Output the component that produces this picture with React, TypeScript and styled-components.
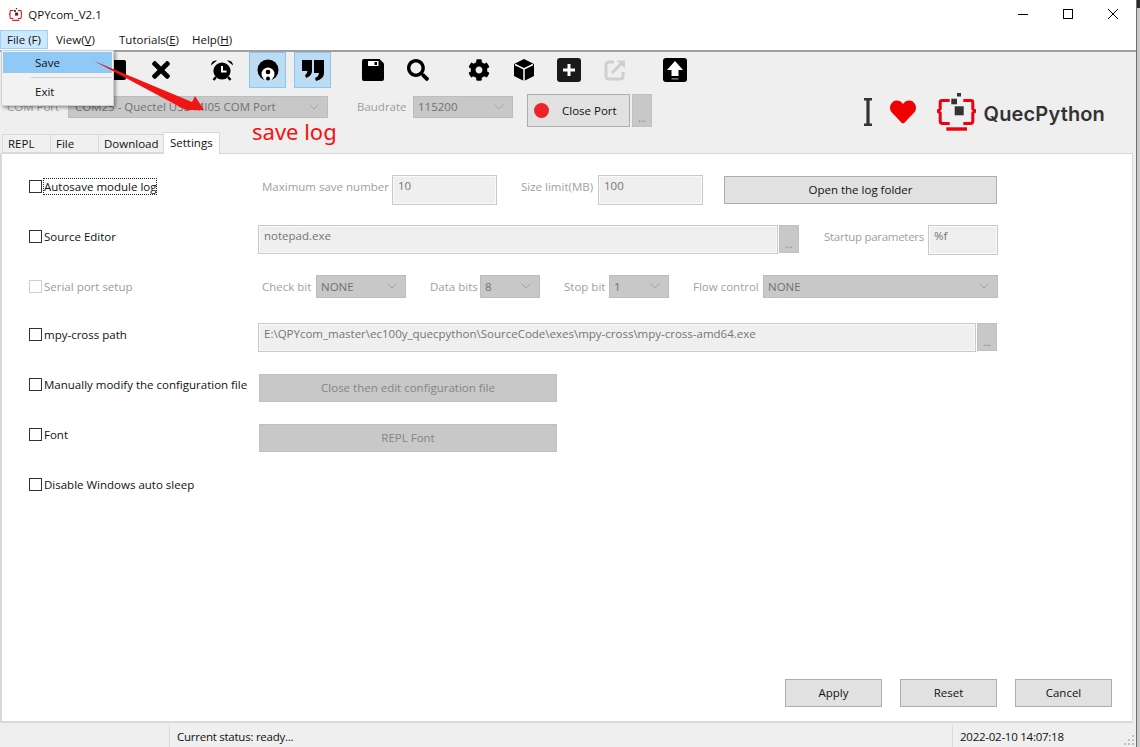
import React from "react";
import styled, { createGlobalStyle } from "styled-components";
import { FaTimes, FaSearch, FaCog, FaHeart } from "react-icons/fa";

const Global = createGlobalStyle`
  html, body { margin: 0; padding: 0; overflow: hidden; background: #c9c9c9; }
  * { box-sizing: border-box; }
  #root { width: 1140px; height: 747px; }
`;

const Screen = styled.div`
  width: 1140px; height: 747px; display: flex; position: relative; overflow: hidden;
  font-family: "Open Sans", "Noto Sans", sans-serif; font-size: 11.5px; color: #111;
`;
const Win = styled.div`
  width: 1136px; height: 747px; display: flex; flex-direction: column; background: #fff;
`;
const Edge = styled.div`
  flex: 1; border-left: 1px solid #6e6e6e; background: linear-gradient(#2a2a2a 0 8px, #c9c9c9 8px);
`;
const TitleBar = styled.div`
  height: 30px; display: flex; align-items: center; padding: 0 1px 2px 9px; background: #fff;
`;
const TitleText = styled.span`
  margin-left: 6px; flex: 1;
`;
const WinBtn = styled.div`
  width: 45px; height: 28px; display: flex; align-items: center; justify-content: center;
`;
const MenuBar = styled.div`
  height: 22px; display: flex; padding-bottom: 1px; border-bottom: 2px solid #a0a0a0; background: #fff;
`;
const MenuItem = styled.div<{ $w: number; $open?: boolean }>`
  width: ${(p) => p.$w}px; height: 19px; display: flex; align-items: center; padding-left: ${(p) => (p.$open ? 6 : 7)}px;
  background: ${(p) => (p.$open ? "#cce8ff" : "transparent")};
  border: 1px solid ${(p) => (p.$open ? "#99d1ff" : "transparent")};
  white-space: nowrap; u { text-underline-offset: 1px; }
`;
const Toolbar = styled.div`
  height: 80px; flex: none; display: flex; background: #efefef; justify-content: space-between;
`;
const ToolLeft = styled.div`
  display: flex; flex-direction: column;
`;
const IconRow = styled.div`
  display: flex; height: 36px; padding-left: 100px;
`;
const ToolBtn = styled.div<{ $ml?: number; $active?: boolean }>`
  width: ${(p) => (p.$active ? 37 : 36)}px; height: 36px; margin-left: ${(p) => p.$ml ?? 0}px; display: flex; align-items: center; justify-content: center;
  color: #000;
  background: ${(p) => (p.$active ? "#bcdcf4" : "transparent")};
  border: 1px solid ${(p) => (p.$active ? "#8cc6ee" : "transparent")};
`;
const PortRow = styled.div`
  display: flex; margin-top: 6px; align-items: flex-start; padding-left: 7px;
`;
const PortLabel = styled.div<{ $w: number; $ml?: number }>`
  width: ${(p) => p.$w}px; margin-left: ${(p) => p.$ml ?? 0}px; height: 24px; flex: none; display: flex; align-items: center; color: #9c9c9c; white-space: nowrap;
`;
const ComboBox = styled.div<{ $w: number; $h?: number; $mt?: number; $pl?: number }>`
  width: ${(p) => p.$w}px; height: ${(p) => p.$h ?? 23}px; margin-top: ${(p) => p.$mt ?? 0}px; flex: none;
  display: flex; align-items: center; justify-content: space-between; padding: 0 8px 1px ${(p) => p.$pl ?? 4}px;
  background: #c8c8c8; border: 1px solid #bdbdbd; color: #717171; white-space: nowrap; overflow: hidden;
`;
const CloseBtn = styled.div`
  width: 103px; height: 33px; margin-left: 14px; display: flex; align-items: center; padding-left: 6px; gap: 13px;
  background: #e1e1e1; border: 1px solid #adadad;
`;
const RedDot = styled.span`
  width: 15px; height: 15px; border-radius: 50%; background: #ee2327;
`;
const Dots = styled.div<{ $h: number; $ml: number }>`
  width: 20px; height: ${(p) => p.$h}px; margin-left: ${(p) => p.$ml}px; flex: none; background: #c8c8c8; border: 1px solid #c0c0c0;
  display: flex; align-items: flex-end; justify-content: center; color: #8a7f8c; line-height: 13px; padding-bottom: 1px; font-size: 10px;
`;
const Brand = styled.div`
  display: flex; align-items: center; margin: 40px 31px 0 0; height: 40px; color: #333;
`;
const BrandName = styled.span`
  font-family: Inter, "Noto Sans", sans-serif; font-weight: 600; font-size: 20px; letter-spacing: 0.15px; margin: 3px 0 0 8px; color: #333;
`;
const HeartWrap = styled.div`
  margin: 0 21px 0 18px; color: #f00000; display: flex;
`;
const Tabs = styled.div`
  height: 21px; flex: none; display: flex; align-items: flex-end; background: #efefef; padding-left: 2px; position: relative; z-index: 1;
`;
const Tab = styled.div<{ $w: number; $sel?: boolean }>`
  width: ${(p) => p.$w}px; height: ${(p) => (p.$sel ? 22 : 19)}px; margin-bottom: ${(p) => (p.$sel ? -1 : 0)}px;
  padding-left: ${(p) => (p.$sel ? 6 : 5)}px; padding-bottom: ${(p) => (p.$sel ? 2 : 0)}px; display: flex; align-items: center;
  background: ${(p) => (p.$sel ? "#fff" : "#f0f0f0")};
  border: 1px solid #d9d9d9; border-bottom: ${(p) => (p.$sel ? "none" : "1px solid #d9d9d9")};
  border-right: ${(p) => (p.$sel ? "1px solid #d9d9d9" : "none")};
`;
const PanelWrap = styled.div`
  flex: 1; display: flex; background: #efefef; padding-right: 3px; min-height: 0;
`;
const Panel = styled.div`
  flex: 1; display: flex; flex-direction: column; background: #fff; border: 1px solid #d9d9d9; border-left-width: 2px; border-bottom-width: 2px; padding: 8px 0 14px 27px;
`;
const Row = styled.div<{ $h?: number }>`
  height: ${(p) => p.$h ?? 50}px; padding-top: 13px; display: flex; align-items: flex-start; flex: none;
`;
const CheckCol = styled.div`
  width: 229px; height: 22px; flex: none; display: flex; align-items: center; gap: 2px; white-space: nowrap;
`;
const Box = styled.span<{ $off?: boolean }>`
  width: 13px; height: 13px; flex: none; background: #fff; border: 1px solid ${(p) => (p.$off ? "#cfcfcf" : "#333")};
`;
const CheckText = styled.span<{ $off?: boolean; $focus?: boolean }>`
  color: ${(p) => (p.$off ? "#9c9c9c" : "#111")};
  outline: ${(p) => (p.$focus ? "1px dotted #222" : "none")};
`;
const FieldLabel = styled.div<{ $w: number; $ml?: number; $tight?: boolean }>`
  width: ${(p) => p.$w}px; margin-left: ${(p) => p.$ml ?? 0}px; height: 22px; flex: none; display: flex; align-items: center; color: #a0a0a0; white-space: nowrap;
  letter-spacing: ${(p) => (p.$tight ? "-0.28px" : "0")};
`;
const Field = styled.div<{ $w: number; $h: number }>`
  width: ${(p) => p.$w}px; height: ${(p) => p.$h}px; flex: none; padding: 2px 5px; line-height: 16px; color: #757575; white-space: nowrap; overflow: hidden;
  background: #efefef; border: 1px solid #c9c9c9; box-shadow: inset 0 0 0 1px #f9f9f9;
`;
const Btn = styled.div<{ $w: number; $ml?: number; $mt?: number; $off?: boolean; $h?: number }>`
  width: ${(p) => p.$w}px; height: ${(p) => p.$h ?? 28}px; margin-left: ${(p) => p.$ml ?? 0}px; margin-top: ${(p) => p.$mt ?? 0}px; flex: none;
  display: flex; align-items: center; justify-content: center; padding-bottom: 2px;
  background: ${(p) => (p.$off ? "#c8c8c8" : "#e1e1e1")};
  border: 1px solid ${(p) => (p.$off ? "#bfbfbf" : "#adadad")};
  color: ${(p) => (p.$off ? "#858585" : "#111")};
`;
const Footer = styled.div`
  margin-top: auto; display: flex; padding-left: 756px; gap: 18px;
`;
const StatusBar = styled.div`
  height: 24px; flex: none; display: flex; background: #efefef; padding-top: 2px; position: relative; letter-spacing: -0.25px;
`;
const StatusCell = styled.div<{ $w: number; $div?: boolean }>`
  width: ${(p) => p.$w}px; flex: none; display: flex; align-items: center; padding-left: ${(p) => (p.$div ? 7 : 0)}px;
  border-left: ${(p) => (p.$div ? "1px solid #d9d9d9" : "none")};
`;
const Grip = styled.svg`
  position: absolute; right: 1px; bottom: 1px;
`;
const Menu = styled.div`
  position: absolute; left: 1px; top: 50px; width: 113px; height: 56px; background: #f2f2f2; border: 1px solid #cfcfcf;
  box-shadow: 2px 2px 3px rgba(0,0,0,.35); padding: 1px 1px; z-index: 5;
`;
const MenuRow = styled.div<{ $hl?: boolean }>`
  height: 21px; display: flex; align-items: center; padding-left: 32px;
  background: ${(p) => (p.$hl ? "#90c8f6" : "transparent")};
`;
const MenuSep = styled.div`
  height: 1px; background: #d0d0d0; margin: 4px 0 3px 28px;
`;
const Arrow = styled.svg`
  position: absolute; left: 90px; top: 56px; z-index: 6;
`;
const SaveLog = styled.div`
  position: absolute; left: 252px; top: 116px; color: #fa0f0f; font-size: 22px; line-height: 30px; z-index: 6; font-family: "Noto Sans", sans-serif;
`;

const Logo = ({ s }: { s: number }) => (
  <svg width={(s * 39) / 38} height={s} viewBox="0 0 39 38" fill="none">
    <path
      d="M12.7 7.5H5Q3.2 7.5 3.2 9.3V16L.6 18L3.2 20V28Q3.2 30.5 5.5 30.5H12.7M26.3 7.5H34Q35.8 7.5 35.8 9.3V16L38.4 18L35.8 20V28Q35.8 30.5 33.5 30.5H26.3"
      stroke="#f0000f"
      strokeWidth="3"
      strokeLinejoin="round"
    />
    <rect x="9.3" y="34.3" width="20.7" height="3.4" fill="#f0000f" />
    <rect x="20" y="0" width="4" height="3.5" fill="#333" />
    <rect x="14.3" y="5.7" width="5.7" height="5.6" fill="#333" />
    <rect x="17.7" y="13.3" width="9" height="9" fill="#333" />
  </svg>
);

const StopIcon = () => (
  <svg width="20" height="20"><rect width="18" height="20" rx="2" /></svg>
);
const AlarmIcon = () => (
  <svg width="24" height="24" viewBox="0 0 24 24">
    <circle cx="12" cy="13" r="8.6" fill="#000" />
    <path d="M12 8v5.5h4.5" stroke="#fff" strokeWidth="2" fill="none" />
    <path d="M1 7.5A5 5 0 0 1 7 2.5ZM23 7.5A5 5 0 0 0 17 2.5Z" fill="#000" />
    <path d="M6 19l-2.5 3M18 19l2.5 3" stroke="#000" strokeWidth="2.4" />
  </svg>
);
const ReplIcon = () => (
  <svg width="24" height="24" viewBox="0 0 24 24">
    <circle cx="12" cy="12" r="10.5" fill="#000" />
    <circle cx="12" cy="16" r="6.5" fill="#fff" />
    <rect x="8" y="21" width="8" height="3" fill="#bcdcf4" />
    <circle cx="12" cy="14" r="2.3" fill="#000" />
    <circle cx="12" cy="20.4" r="2" fill="#000" />
  </svg>
);
const QuoteIcon = () => (
  <svg width="24" height="24" viewBox="0 0 24 24" fill="#000">
    <path d="M1 2H11V13Q11 18 5 20L4 17Q6 16 6.5 13H1Z" />
    <path d="M13 2H23V15Q23 21 15 23L14 20Q17.5 19 18 15H13Z" />
  </svg>
);
const SaveIcon = () => (
  <svg width="24" height="24" viewBox="0 0 24 24">
    <path d="M3 1H18.5L23 5.5V21Q23 23 21 23H3Q1 23 1 21V3Q1 1 3 1Z" fill="#000" />
    <rect x="7" y="3" width="10.5" height="5" fill="#fff" />
    <rect x="13.5" y="4" width="2.5" height="3" fill="#000" />
  </svg>
);
const CubeIcon = () => (
  <svg width="24" height="24" viewBox="0 0 24 24">
    <path d="M12 1L22 6V18L12 23L2 18V6Z" fill="#000" />
    <path d="M3 6.5L12 11L21 6.5M12 11V23" stroke="#fff" strokeWidth="1.5" fill="none" />
  </svg>
);
const PlusIcon = () => (
  <svg width="24" height="24" viewBox="0 0 24 24">
    <rect width="24" height="24" rx="3" fill="#1a1a1a" />
    <path d="M12 6V18M6 12H18" stroke="#fff" strokeWidth="3" />
  </svg>
);
const LinkIcon = () => (
  <svg width="24" height="24" viewBox="0 0 24 24" fill="none" stroke="#cfcfcf" strokeWidth="3">
    <path d="M11 4H6Q3 4 3 7V18Q3 21 6 21H17Q20 21 20 18V14" />
    <path d="M9 15L20 4" />
    <path d="M14 2.5H22V10.5Z" fill="#cfcfcf" stroke="none" />
  </svg>
);
const UploadIcon = () => (
  <svg width="24" height="24" viewBox="0 0 24 24">
    <rect width="24" height="24" rx="3" fill="#000" />
    <path d="M12 3L20 12H15.5V18H8.5V12H4Z" fill="#fff" />
    <rect x="8.5" y="20" width="7" height="1.6" fill="#777" />
  </svg>
);
const Cursor = () => (
  <svg width="8" height="28" viewBox="0 0 8 28" fill="#333">
    <rect width="8" height="2.5" />
    <rect y="25.5" width="8" height="2.5" />
    <rect x="2.4" width="3.2" height="28" />
  </svg>
);
const Chevron = () => (
  <svg width="10" height="6" viewBox="0 0 10 6" fill="none" stroke="#a5a5a5">
    <path d="M.5.5L5 5L9.5.5" />
  </svg>
);

const Combo = ({ w, h, mt, pl, text }: { w: number; h?: number; mt?: number; pl?: number; text: string }) => (
  <ComboBox $w={w} $h={h} $mt={mt} $pl={pl}>
    <span>{text}</span>
    <Chevron />
  </ComboBox>
);

const Check = ({ text, off, focus }: { text: string; off?: boolean; focus?: boolean }) => (
  <CheckCol>
    <Box $off={off} />
    <CheckText $off={off} $focus={focus}>{text}</CheckText>
  </CheckCol>
);

export default function App() {
  return (
    <Screen>
      <Global />
      <Win>
        <TitleBar>
          <Logo s={13} />
          <TitleText>QPYcom_V2.1</TitleText>
          <WinBtn>
            <svg width="10" height="10"><path d="M0 5.5H10" stroke="#000" /></svg>
          </WinBtn>
          <WinBtn>
            <svg width="10" height="10"><rect x=".5" y=".5" width="9" height="9" fill="none" stroke="#000" /></svg>
          </WinBtn>
          <WinBtn>
            <svg width="10" height="10"><path d="M0 0L10 10M10 0L0 10" stroke="#000" /></svg>
          </WinBtn>
        </TitleBar>
        <MenuBar>
          <MenuItem $w={48} $open>File (F)</MenuItem>
          <MenuItem $w={63}>View(<u>V</u>)</MenuItem>
          <MenuItem $w={73}>Tutorials(<u>E</u>)</MenuItem>
          <MenuItem $w={60}>Help(<u>H</u>)</MenuItem>
        </MenuBar>
        <Toolbar>
          <ToolLeft>
            <IconRow>
              <ToolBtn><StopIcon /></ToolBtn>
              <ToolBtn $ml={7}><FaTimes size={26} /></ToolBtn>
              <ToolBtn $ml={25}><AlarmIcon /></ToolBtn>
              <ToolBtn $ml={9} $active><ReplIcon /></ToolBtn>
              <ToolBtn $ml={8} $active><QuoteIcon /></ToolBtn>
              <ToolBtn $ml={24}><SaveIcon /></ToolBtn>
              <ToolBtn $ml={9}><FaSearch size={22} /></ToolBtn>
              <ToolBtn $ml={25}><FaCog size={22} /></ToolBtn>
              <ToolBtn $ml={9}><CubeIcon /></ToolBtn>
              <ToolBtn $ml={9}><PlusIcon /></ToolBtn>
              <ToolBtn $ml={10}><LinkIcon /></ToolBtn>
              <ToolBtn $ml={24}><UploadIcon /></ToolBtn>
            </IconRow>
            <PortRow>
              <PortLabel $w={61}>COM Port</PortLabel>
              <Combo w={260} mt={2} h={22} pl={6} text="COM25 - Quectel USB MI05 COM Port" />
              <PortLabel $w={56} $ml={29}>Baudrate</PortLabel>
              <Combo w={100} mt={2} h={22} text="115200" />
              <CloseBtn><RedDot />Close Port</CloseBtn>
              <Dots $h={33} $ml={2}>...</Dots>
            </PortRow>
          </ToolLeft>
          <Brand>
            <Cursor />
            <HeartWrap><FaHeart size={26} /></HeartWrap>
            <Logo s={38} />
            <BrandName>QuecPython</BrandName>
          </Brand>
        </Toolbar>
        <Tabs>
          <Tab $w={48}>REPL</Tab>
          <Tab $w={48}>File</Tab>
          <Tab $w={65}>Download</Tab>
          <Tab $w={57} $sel>Settings</Tab>
        </Tabs>
        <PanelWrap>
          <Panel>
            <Row>
              <Check text="Autosave module log" focus />
              <FieldLabel $w={130} $ml={4}>Maximum save number</FieldLabel>
              <Field $w={105} $h={30}>10</Field>
              <FieldLabel $w={77} $ml={24}>Size limit(MB)</FieldLabel>
              <Field $w={105} $h={30}>100</Field>
              <Btn $w={273} $ml={21} $mt={1}>Open the log folder</Btn>
            </Row>
            <Row>
              <Check text="Source Editor" />
              <Field $w={520} $h={29}>notepad.exe</Field>
              <Dots $h={28} $ml={1}>...</Dots>
              <FieldLabel $w={104} $ml={25} $tight>Startup parameters</FieldLabel>
              <Field $w={70} $h={30}>%f</Field>
            </Row>
            <Row $h={48}>
              <Check text="Serial port setup" off />
              <FieldLabel $w={54} $ml={4}>Check bit</FieldLabel>
              <Combo w={90} text="NONE" />
              <FieldLabel $w={50} $ml={24}>Data bits</FieldLabel>
              <Combo w={60} text="8" />
              <FieldLabel $w={45} $ml={24}>Stop bit</FieldLabel>
              <Combo w={60} text="1" />
              <FieldLabel $w={70} $ml={24}>Flow control</FieldLabel>
              <Combo w={235} text="NONE" />
            </Row>
            <Row>
              <Check text="mpy-cross path" />
              <Field $w={718} $h={29}>E:\QPYcom_master\ec100y_quecpython\SourceCode\exes\mpy-cross\mpy-cross-amd64.exe</Field>
              <Dots $h={28} $ml={1}>...</Dots>
            </Row>
            <Row>
              <Check text="Manually modify the configuration file" />
              <Btn $w={298} $ml={1} $mt={1} $off>Close then edit configuration file</Btn>
            </Row>
            <Row>
              <Check text="Font" />
              <Btn $w={298} $ml={1} $mt={1} $off>REPL Font</Btn>
            </Row>
            <Row>
              <Check text="Disable Windows auto sleep" />
            </Row>
            <Footer>
              <Btn $w={97}>Apply</Btn>
              <Btn $w={97}>Reset</Btn>
              <Btn $w={97}>Cancel</Btn>
            </Footer>
          </Panel>
        </PanelWrap>
        <StatusBar>
          <StatusCell $w={169} />
          <StatusCell $w={783} $div>Current status: ready...</StatusCell>
          <StatusCell $w={180} $div>2022-02-10 14:07:18</StatusCell>
          <Grip width="11" height="11" viewBox="0 0 11 11" fill="#bdbdbd">
            <rect x="8" y="0" width="2" height="2" />
            <rect x="4" y="4" width="2" height="2" />
            <rect x="8" y="4" width="2" height="2" />
            <rect x="0" y="8" width="2" height="2" />
            <rect x="4" y="8" width="2" height="2" />
            <rect x="8" y="8" width="2" height="2" />
          </Grip>
        </StatusBar>
      </Win>
      <Edge />
      <Menu>
        <MenuRow $hl>Save</MenuRow>
        <MenuSep />
        <MenuRow>Exit</MenuRow>
      </Menu>
      <Arrow width="120" height="60" viewBox="0 0 120 60">
        <path d="M4 5L102 46L105 40L114 54L97 54L92 52Z" fill="#f01414" />
      </Arrow>
      <SaveLog>save log</SaveLog>
    </Screen>
  );
}
